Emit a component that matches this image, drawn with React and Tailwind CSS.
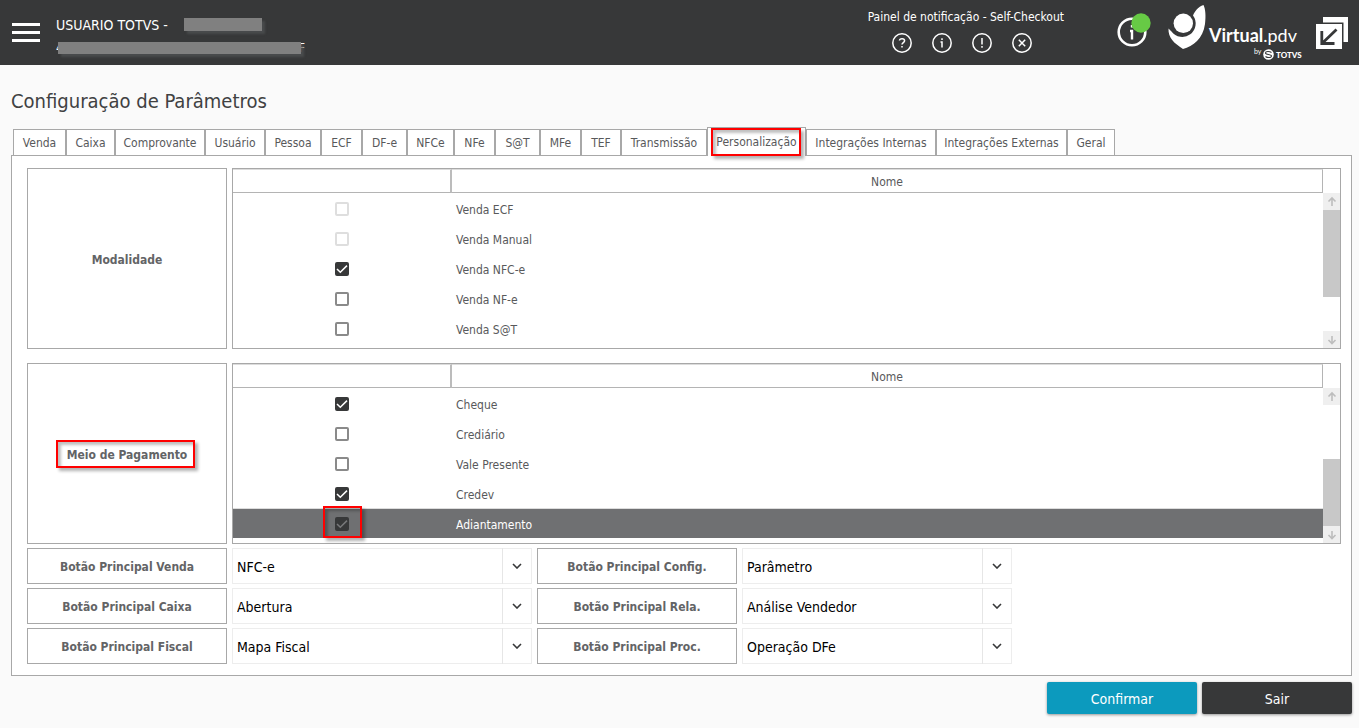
import { useState } from "react";

const TABS = [
  { name: "Venda", width: "w-[53px]" },
  { name: "Caixa", width: "w-[49px]" },
  { name: "Comprovante", width: "w-[90px]" },
  { name: "Usuário", width: "w-[60px]" },
  { name: "Pessoa", width: "w-[56px]" },
  { name: "ECF", width: "w-[41px]" },
  { name: "DF-e", width: "w-[45px]" },
  { name: "NFCe", width: "w-[47px]" },
  { name: "NFe", width: "w-[41px]" },
  { name: "S@T", width: "w-[45px]" },
  { name: "MFe", width: "w-[41px]" },
  { name: "TEF", width: "w-[40px]" },
  { name: "Transmissão", width: "w-[86px]" },
  { name: "Personalização", width: "w-[99px]" },
  { name: "Integrações Internas", width: "w-[130px]" },
  { name: "Integrações Externas", width: "w-[131px]" },
  { name: "Geral", width: "w-[48px]" },
];

const MODALITIES = [
  { name: "Venda ECF", checked: false, disabled: true },
  { name: "Venda Manual", checked: false, disabled: true },
  { name: "Venda NFC-e", checked: true },
  { name: "Venda NF-e", checked: false },
  { name: "Venda S@T", checked: false },
];

const PAYMENTS = [
  { name: "Cheque", checked: true },
  { name: "Crediário", checked: false },
  { name: "Vale Presente", checked: false },
  { name: "Credev", checked: true },
  { name: "Adiantamento", checked: true, selected: true },
];

const MAIN_BUTTONS = [
  { label: "Botão Principal Venda", value: "NFC-e" },
  { label: "Botão Principal Config.", value: "Parâmetro" },
  { label: "Botão Principal Caixa", value: "Abertura" },
  { label: "Botão Principal Rela.", value: "Análise Vendedor" },
  { label: "Botão Principal Fiscal", value: "Mapa Fiscal" },
  { label: "Botão Principal Proc.", value: "Operação DFe" },
];

function Highlight({ className }) {
  return (
    <span
      aria-hidden="true"
      className={`pointer-events-none absolute border-2 border-[#ff0000] shadow-[3px_3px_3px_rgba(0,0,0,0.3),inset_3px_3px_3px_rgba(0,0,0,0.25)] ${className}`}
    />
  );
}

function NoticeButton({ label, children }) {
  return (
    <button type="button" aria-label={label} className="size-5">
      <svg viewBox="0 0 20 20" fill="none" stroke="#fff" strokeWidth="1.5" className="size-5">
        <circle cx="10" cy="10" r="9.2" />
        {children}
      </svg>
    </button>
  );
}

function Logo() {
  return (
    <svg viewBox="0 0 136 60" className="h-[60px] w-[136px]" role="img" aria-label="Virtual.pdv by TOTVS">
      <path
        d="M35.500 5 C30 7 27 11 25 15.500 A12.500 12.500 0 0 1 3.500 31.500 L0.500 28.500 C0 38 6 43 15 49 C25 46 35 39 37 24 C38 16 37.500 9 35.500 5 Z"
        fill="#fff"
      />
      <circle cx="15.300" cy="23.300" r="9.700" fill="#fff" />
      <text x="41" y="42" fill="#fff" fontSize="18" fontFamily="Lato, sans-serif">
        <tspan fontWeight="700">Virtual</tspan>
        <tspan fontWeight="400">.pdv</tspan>
      </text>
      <text x="86" y="54" fill="#fff" fontSize="7" fontFamily="Lato, sans-serif">by</text>
      <circle cx="100.500" cy="54.500" r="5.300" fill="#fff" />
      <path d="M103.500 52.500 C101.500 51 97.500 51 97.500 53 C97.500 55 103.500 54 103.500 56 C103.500 58 99.500 58 97.500 56.500" fill="none" stroke="#373839" strokeWidth="1.100" />
      <text x="108" y="58" fill="#fff" fontSize="8" fontWeight="900" fontFamily="Lato, sans-serif">TOTVS</text>
    </svg>
  );
}

function Header() {
  return (
    <header className="flex h-[65px] items-center bg-[#373839] pr-[11px] pl-3 text-white">
      <button type="button" aria-label="Menu" className="flex flex-col gap-[5px]">
        <span className="h-[3px] w-7 bg-white" />
        <span className="h-[3px] w-7 bg-white" />
        <span className="h-[3px] w-7 bg-white" />
      </button>
      <div className="ml-4 flex flex-col gap-[3px] pt-[7px] text-sm leading-5">
        <p className="flex items-center whitespace-pre">
          USUARIO TOTVS -
          <span className="ml-4 h-[13px] w-[78px] bg-[#808080] shadow-[3px_3px_2px_rgba(80,82,84,0.7)]" />
        </p>
        <p className="relative flex h-5 w-[249px] items-center justify-between text-xs">
          <span>4</span>
          <span>F</span>
          <span className="absolute top-1 left-[2px] h-3 w-[243px] bg-[#808080] shadow-[3px_3px_2px_rgba(80,82,84,0.7)]" />
        </p>
      </div>
      <div className="ml-auto flex flex-col gap-2 pb-[3px]">
        <p className="text-xs leading-4">Painel de notificação - Self-Checkout</p>
        <div className="flex gap-5 pl-6">
          <NoticeButton label="Ajuda">
            <path d="M7.500 7.500 C7.500 5 12.600 5 12.600 7.800 C12.600 9.600 10 9.700 10 11.600 M10 13 V14.600" />
          </NoticeButton>
          <NoticeButton label="Informações">
            <path d="M10 5.300 V7 M8.500 9 H10 V14.500" />
          </NoticeButton>
          <NoticeButton label="Alertas">
            <path d="M10 5 V11.500 M10 13 V14.700" />
          </NoticeButton>
          <NoticeButton label="Erros">
            <path d="M6.800 6.800 L13.200 13.200 M13.200 6.800 L6.800 13.200" />
          </NoticeButton>
        </div>
      </div>
      <button type="button" aria-label="Situação" className="ml-[52px] pb-[3px]">
        <svg viewBox="0 0 36 36" className="size-9">
          <circle cx="16" cy="19" r="13.300" fill="none" stroke="#fff" strokeWidth="2.600" />
          <path d="M16 12 V14.500 M14 18 H16 V26.500" fill="none" stroke="#fff" strokeWidth="2.400" />
          <circle cx="25" cy="10" r="9.700" fill="#67ca45" />
        </svg>
      </button>
      <div className="ml-4 self-start">
        <Logo />
      </div>
      <button type="button" aria-label="Restaurar janela" className="ml-3">
        <svg viewBox="0 0 32 32" className="size-8">
          <path d="M7 0 H32 V25 H7 Z" fill="#fff" />
          <path d="M0 5.500 H27.500 V32 H0 Z" fill="#373839" />
          <path d="M0 7 H26 V32 H0 Z" fill="#fff" />
          <path d="M20.500 12.500 L6.500 26 M5.800 14 V26.500 H18.500" fill="none" stroke="#373839" strokeWidth="2.800" />
        </svg>
      </button>
    </header>
  );
}

function Check({ item }) {
  const [on, setOn] = useState(item.checked);
  return (
    <span className="relative inline-block size-[14px] align-middle">
      <input
        type="checkbox"
        aria-label={item.name}
        checked={on}
        disabled={item.disabled}
        onChange={(event) => setOn(event.target.checked)}
        className="block size-[14px] appearance-none rounded-[2px] border-2 border-[#8a8a8a] bg-white checked:border-[#373839] checked:bg-[#373839] disabled:border-[#dedede]"
      />
      {on && (
        <svg viewBox="0 0 14 14" className="pointer-events-none absolute inset-0 size-[14px]">
          <path d="M2 7 L5.300 10.300 L12 3.600" fill="none" stroke={item.selected ? "#77787a" : "#fff"} strokeWidth="1.500" />
        </svg>
      )}
    </span>
  );
}

function ScrollArrow({ up }) {
  return (
    <button type="button" aria-label={up ? "Rolar para cima" : "Rolar para baixo"} className="h-[17px] w-[17px] bg-[#efefef]">
      <svg viewBox="0 0 17 17" fill="none" stroke="#bdbdbd" strokeWidth="1.600" className="size-[17px]">
        <path d={up ? "M9 13 V5.500 M5.500 8.500 L9 5 L12.500 8.500" : "M9 5 V12 M5.500 9 L9 12.500 L12.500 9"} />
      </svg>
    </button>
  );
}

function Grid({ rows, before, thumb }) {
  return (
    <div className="flex h-[181px] min-w-0 flex-1 border border-[#a8a8a8]">
      <div className="min-w-0 flex-1">
        <table className="w-full table-fixed border-separate border-spacing-0 text-xs">
          <thead>
            <tr className="h-6">
              <th aria-label="Seleção" className="w-[219px] border-t border-r-2 border-b border-t-[#dcdcdc] border-r-[#bcbcbc] border-b-[#b4b4b4] p-0" />
              <th className="border-t border-r border-b border-t-[#dcdcdc] border-r-[#b4b4b4] border-b-[#b4b4b4] p-0 pt-[2px] font-normal">Nome</th>
            </tr>
          </thead>
          <tbody>
            {rows.map((row) => (
              <tr
                key={row.name}
                className={row.selected ? "h-[30px] text-white" : "h-[30px]"}
              >
                <td
                  className={`relative p-0 pr-[2px] text-center leading-[14px] ${
                    row.selected ? "border-t border-[#dcdcdc] bg-[#6f7072]" : "pt-px"
                  }`}
                >
                  <Check item={row} />
                  {row.selected && <Highlight className="-top-[3px] left-[90px] h-[32px] w-[39px]" />}
                </td>
                <td
                  className={`p-0 pl-1 ${
                    row.selected ? "border-t border-[#dcdcdc] bg-[#6f7072] pt-[2px]" : "pt-[3px]"
                  }`}
                >
                  {row.name}
                </td>
              </tr>
            ))}
          </tbody>
        </table>
      </div>
      <div className="flex w-[17px] flex-col pt-6">
        <ScrollArrow up />
        <div className="flex flex-1 flex-col">
          <div className={before} />
          <div className={`bg-[#c8c8c8] ${thumb}`} />
        </div>
        <ScrollArrow />
      </div>
    </div>
  );
}

function MainButtonField({ label, value, index }) {
  const id = `botao-principal-${index}`;
  return (
    <>
      <label htmlFor={id} className="flex h-9 items-center justify-center border border-[#a8a8a8] pt-[2px] text-xs font-bold text-[#636466]">
        {label}
      </label>
      <div className="relative flex h-9">
        <select id={id} defaultValue={value} className="w-full appearance-none border border-[#ededed] bg-white pt-[2px] pr-8 pl-1 text-sm text-black">
          <option>{value}</option>
        </select>
        <span className="pointer-events-none absolute inset-y-0 right-0 flex w-[30px] items-center justify-center border-l border-[#e6e6e6] pr-[2px]">
          <svg viewBox="0 0 10 6" fill="none" stroke="#373839" strokeWidth="1.600" className="h-[6px] w-[10px]">
            <path d="M1 1 L5 5 L9 1" />
          </svg>
        </span>
      </div>
    </>
  );
}

export default function App() {
  const [active, setActive] = useState("Personalização");
  return (
    <div className="min-h-screen bg-[#fafafa] font-['DejaVu_Sans_Condensed','DejaVu_Sans',sans-serif] text-[#58595b]">
      <Header />
      <main className="pt-5 pr-[7px] pb-3 pl-[11px]">
        <h1 className="text-xl leading-8 text-[#404142]">Configuração de Parâmetros</h1>
        <div role="tablist" className="mt-[10px] flex items-end pl-[2px]">
          {TABS.map(({ name, width }) => (
            <button
              key={name}
              type="button"
              role="tab"
              aria-selected={active === name}
              onClick={() => setActive(name)}
              className={`relative shrink border-x border-t border-[#a8a8a8] bg-white text-center text-xs whitespace-nowrap ${width} ${
                active === name ? "-mb-px h-[29px] pb-px" : "h-[26px]"
              }`}
            >
              {name}
              {name === "Personalização" && <Highlight className="top-0 left-[3px] h-[28px] w-[90px]" />}
            </button>
          ))}
        </div>
        <section className="border border-[#a8a8a8] bg-white pt-3 pr-[10px] pb-[11px] pl-[15px]">
          <div className="flex gap-[5px]">
            <div className="flex w-[200px] items-center justify-center border border-[#a8a8a8] pt-[2px] text-xs font-bold text-[#636466]">
              Modalidade
            </div>
            <Grid rows={MODALITIES} before="h-0" thumb="h-[87px]" />
          </div>
          <div className="mt-[14px] flex gap-[5px]">
            <div className="flex w-[200px] items-center justify-center border border-[#a8a8a8] pt-[2px] text-xs font-bold text-[#636466]">
              <span className="relative">
                Meio de Pagamento
                <Highlight className="-top-[7px] -right-2 -bottom-[5px] -left-[11px]" />
              </span>
            </div>
            <Grid rows={PAYMENTS} before="flex-1" thumb="h-[67px]" />
          </div>
          <div className="mt-1 grid grid-cols-[200px_300px_200px_270px] gap-x-[5px] gap-y-1">
            {MAIN_BUTTONS.map((field, index) => (
              <MainButtonField key={field.label} index={index} {...field} />
            ))}
          </div>
        </section>
        <div className="mt-[6px] flex justify-end gap-[5px] text-sm text-white">
          <button type="button" className="h-8 w-[150px] rounded-[2px] bg-[#0c9abe] pt-[2px] shadow-[0_1px_3px_rgba(0,0,0,0.4)]">
            Confirmar
          </button>
          <button type="button" className="h-8 w-[150px] rounded-[2px] bg-[#373839] pt-[2px] shadow-[0_1px_3px_rgba(0,0,0,0.4)]">
            Sair
          </button>
        </div>
      </main>
    </div>
  );
}
